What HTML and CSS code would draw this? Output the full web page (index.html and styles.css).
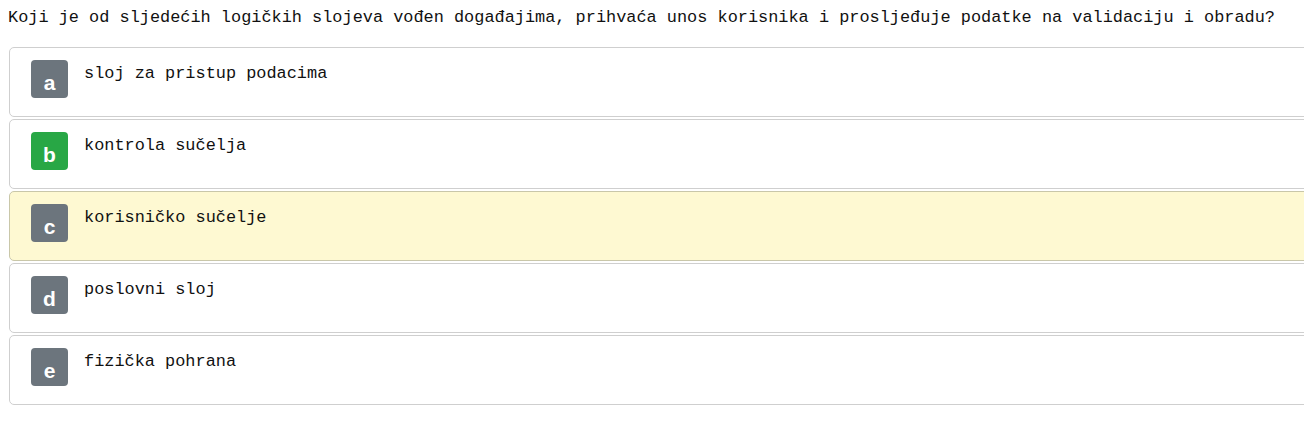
FILE: index.html
```html
<!DOCTYPE html>
<html lang="hr">
<head>
<meta charset="utf-8">
<title>Pitanje</title>
<link rel="stylesheet" href="styles.css">
</head>
<body>
<div class="page">
  <p class="question">Koji je od sljedećih logičkih slojeva vođen događajima, prihvaća unos korisnika i prosljeđuje podatke na validaciju i obradu?</p>
  <div class="options">
    <div class="option"><span class="badge">a</span><span class="label">sloj za pristup podacima</span></div>
    <div class="option"><span class="badge badge-green">b</span><span class="label">kontrola sučelja</span></div>
    <div class="option option-selected"><span class="badge">c</span><span class="label">korisničko sučelje</span></div>
    <div class="option"><span class="badge">d</span><span class="label">poslovni sloj</span></div>
    <div class="option"><span class="badge">e</span><span class="label">fizička pohrana</span></div>
  </div>
</div>
</body>
</html>
```

FILE: styles.css
```css
html, body {
  margin: 0;
  padding: 0;
  background: #ffffff;
  overflow: hidden;
}

.page {
  padding: 8px 0 0 8px;
  font-family: "Liberation Mono", "Courier New", monospace;
  font-size: 16.9px;
  color: #111;
}

.question {
  margin: 0;
  line-height: 20px;
  white-space: nowrap;
}

.options {
  margin-top: 19px;
  margin-left: 1px;
  width: 1320px;
  display: flex;
  flex-direction: column;
  gap: 2px;
}

.option {
  box-sizing: border-box;
  height: 70px;
  border: 1px solid #cfcfcf;
  border-radius: 5px;
  background: #ffffff;
  padding: 12px 0 0 21px;
  display: flex;
  align-items: flex-start;
  gap: 16px;
}

.option-selected {
  background: #fef9d2;
  border-color: #c9c7a9;
}

.badge {
  flex: none;
  width: 37px;
  height: 38px;
  border-radius: 4px;
  background: #6c757d;
  color: #ffffff;
  font-family: "Liberation Sans", Arial, sans-serif;
  font-weight: bold;
  font-size: 21px;
  line-height: 45px;
  text-align: center;
}

.badge-green {
  background: #28a745;
}

.label {
  padding-top: 4px;
  line-height: 20px;
  white-space: nowrap;
}
```
